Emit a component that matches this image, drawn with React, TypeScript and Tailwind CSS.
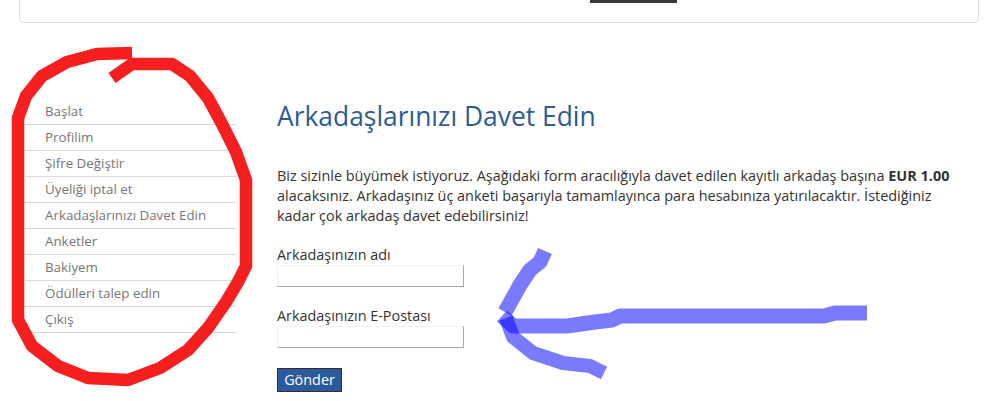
import React from "react";

const menu = [
  "Başlat",
  "Profilim",
  "Şifre Değiştir",
  "Üyeliği iptal et",
  "Arkadaşlarınızı Davet Edin",
  "Anketler",
  "Bakiyem",
  "Ödülleri talep edin",
  "Çıkış",
];

export default function App() {
  return (
    <div
      className="relative w-[994px] h-[401px] overflow-hidden bg-white"
      style={{ fontFamily: '"Open Sans", "Noto Sans", sans-serif' }}
    >
      <div className="ml-[19px] w-[960px] h-[23px] border-x border-b border-[#dcdcdc] rounded-b-[5px] flex pl-[570px]">
        <div className="w-[87px] h-[3px] bg-[#3a3a3a]" />
      </div>

      <div className="flex mt-[76px]">
        <ul className="ml-[25px] w-[211px] shrink-0">
          {menu.map((m) => (
            <li
              key={m}
              className="h-[26px] border-b border-[#dadada] pl-[20px] text-[13.35px] leading-[25px] text-[#767676]"
            >
              {m}
            </li>
          ))}
        </ul>

        <div className="ml-[41px] w-[685px] mt-[3px]">
          <h1 className="text-[26.4px] leading-[29px] font-normal text-[#2d5b92]">
            Arkadaşlarınızı Davet Edin
          </h1>
          <p className="mt-[35px] text-[14.45px] leading-[20px] text-[#333]">
            Biz sizinle büyümek istiyoruz. Aşağıdaki form aracılığıyla davet edilen kayıtlı arkadaş başına{" "}
            <b className="font-bold">EUR 1.00</b> alacaksınız. Arkadaşınız üç anketi başarıyla tamamlayınca para
            hesabınıza yatırılacaktır. İstediğiniz kadar çok arkadaş davet edebilirsiniz!
          </p>

          <div className="mt-[19px] text-[14.4px] leading-[20px] text-[#333]">Arkadaşınızın adı</div>
          <div className="w-[187px] h-[22px] border border-[#f2f2f2] border-r-[#a9a9a9] border-b-[#a9a9a9]" />

          <div className="mt-[19px] text-[14.4px] leading-[20px] text-[#333]">Arkadaşınızın E-Postası</div>
          <div className="w-[187px] h-[22px] border border-[#f2f2f2] border-r-[#a9a9a9] border-b-[#a9a9a9]" />

          <button className="mt-[20px] w-[65px] h-[24px] bg-[#2c5a9e] border border-[#3a2a30] text-white text-[14.4px] leading-[20px] flex items-center justify-center">
            Gönder
          </button>
        </div>
      </div>

      <svg
        className="absolute left-0 top-0 pointer-events-none"
        width="994"
        height="401"
        viewBox="0 0 994 401"
      >
        <path
          d="M132 53 L97 54 L67 62 L42 76 L26 96 L18 118 L18 320 L32 346 L58 366 L88 378 L128 380 L160 368 L188 350 L208 328 L226 302 L238 282 L246 266 L246 180 L236 152 L222 124 L208 98 L190 76 L172 64 L132 64 L112 78"
          fill="none"
          stroke="#f51f1f"
          strokeWidth="12.5"
          strokeLinejoin="round"
        />
        <g fill="none" stroke="#0000ff" strokeWidth="15" strokeLinejoin="round" opacity="0.52">
          <path d="M867 313 L835 313 L824 316 L620 316 L612 320 L595 322 L567 326 L513 326 L502 316" />
        </g>
        <g fill="none" stroke="#0000ff" strokeWidth="15" strokeLinejoin="round" opacity="0.52">
          <path d="M545 251 L540 262 L530 270 L520 285 L505 312" />
        </g>
        <g fill="none" stroke="#0000ff" strokeWidth="14" strokeLinejoin="round" opacity="0.52">
          <path d="M506 318 L513 337 L533 353 L563 363 L590 366 L604 373" />
        </g>
      </svg>
    </div>
  );
}
